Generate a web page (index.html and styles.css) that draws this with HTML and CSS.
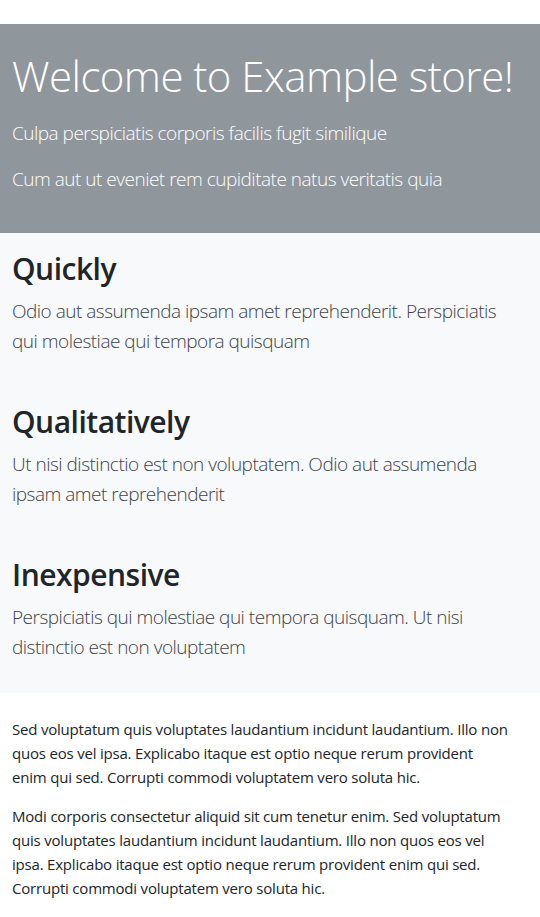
FILE: index.html
```html
<!DOCTYPE html>
<html lang="en">
<head>
<meta charset="utf-8">
<title>Example store</title>
<link rel="stylesheet" href="styles.css">
</head>
<body>
<header class="hero">
  <h1 class="hero-title">Welcome to Example store!</h1>
  <p class="hero-lead">Culpa perspiciatis corporis facilis fugit similique</p>
  <p class="hero-lead">Cum aut ut eveniet rem cupiditate natus veritatis quia</p>
</header>
<section class="features">
  <div class="feature">
    <h2 class="feature-title">Quickly</h2>
    <p class="feature-text">Odio aut assumenda ipsam amet reprehenderit. Perspiciatis qui molestiae qui tempora quisquam</p>
  </div>
  <div class="feature">
    <h2 class="feature-title">Qualitatively</h2>
    <p class="feature-text">Ut nisi distinctio est non voluptatem. Odio aut assumenda ipsam amet reprehenderit</p>
  </div>
  <div class="feature">
    <h2 class="feature-title">Inexpensive</h2>
    <p class="feature-text">Perspiciatis qui molestiae qui tempora quisquam. Ut nisi distinctio est non voluptatem</p>
  </div>
</section>
<main class="content">
  <p class="content-text">Sed voluptatum quis voluptates laudantium incidunt laudantium. Illo non quos eos vel ipsa. Explicabo itaque est optio neque rerum provident enim qui sed. Corrupti commodi voluptatem vero soluta hic.</p>
  <p class="content-text">Modi corporis consectetur aliquid sit cum tenetur enim. Sed voluptatum quis voluptates laudantium incidunt laudantium. Illo non quos eos vel ipsa. Explicabo itaque est optio neque rerum provident enim qui sed. Corrupti commodi voluptatem vero soluta hic.</p>
</main>
</body>
</html>
```
FILE: styles.css
```css
* { box-sizing: border-box; }
html, body { margin: 0; padding: 0; }
body {
  font-family: "Open Sans", "Noto Sans", sans-serif;
  color: #212529;
  background: #fff;
  padding-top: 24px;
}
.hero {
  background: #8f969c;
  color: #fff;
  padding: 26px 8px 23px 12px;
}
.hero-title {
  margin: 0 0 16px;
  font-size: 42px;
  line-height: 52px;
  font-weight: 300;
  letter-spacing: -0.55px;
  white-space: nowrap;
}
.hero-lead {
  margin: 0 0 16px;
  font-size: 19px;
  line-height: 30px;
  font-weight: 300;
  letter-spacing: -0.5px;
}
.features {
  background: #f8f9fa;
  padding: 17px 22px 15px 12px;
  display: flex;
  flex-direction: column;
  gap: 31px;
}
.feature-title {
  margin: 0 0 8px;
  font-size: 30px;
  line-height: 38px;
  font-weight: 600;
  letter-spacing: -0.5px;
}
.feature-text {
  margin: 0 0 16px;
  font-size: 19px;
  line-height: 30px;
  font-weight: 300;
  letter-spacing: -0.5px;
  color: #3d4349;
}
.content {
  padding: 24px 29px 24px 12px;
}
.content-text {
  margin: 0 0 15px;
  font-size: 15px;
  line-height: 24px;
  letter-spacing: -0.2px;
}
```
